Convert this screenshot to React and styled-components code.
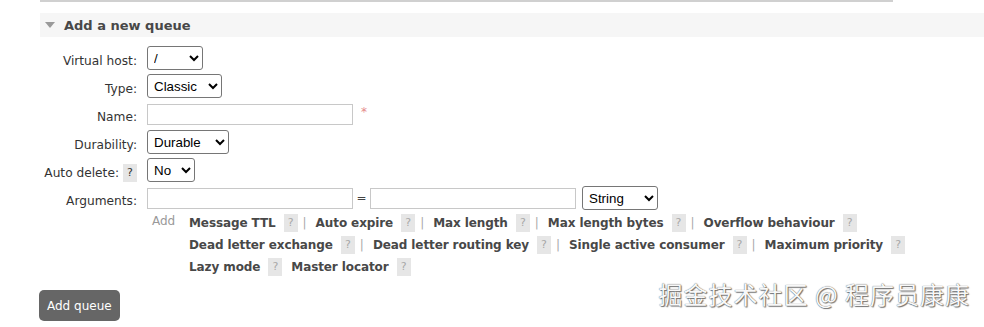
import React from "react";
import styled, { createGlobalStyle } from "styled-components";

const Global = createGlobalStyle`
  body {
    margin: 0;
    background: #fff;
    font-family: "DejaVu Sans", Verdana, sans-serif;
    font-size: 12px;
    color: #484848;
  }
`;

const Page = styled.div`
  position: relative;
  width: 984px;
  height: 327px;
  overflow: hidden;
  padding-left: 40px;
  box-sizing: border-box;
`;

const TopRule = styled.div`
  width: 853px;
  height: 2px;
  background: #d0d0d0;
`;

const Section = styled.div`
  margin-top: 11px;
`;

const SectionHead = styled.div`
  display: flex;
  align-items: center;
  height: 24px;
  background: #f6f6f6;
  margin-right: -40px;
  padding-left: 5px;
  font-size: 13px;
  font-weight: bold;
  color: #484848;
`;

const Arrow = styled.span`
  width: 0;
  height: 0;
  border-left: 5px solid transparent;
  border-right: 5px solid transparent;
  border-top: 6px solid #9a9a9a;
  margin-right: 9px;
`;

const Form = styled.div`
  display: grid;
  grid-template-columns: 97px 1fr;
  grid-auto-rows: 28px;
  column-gap: 10px;
  margin-top: 7px;
`;

const Label = styled.div`
  display: flex;
  align-items: center;
  justify-content: flex-end;
  gap: 4px;
  padding-top: 5px;
  font-size: 12.2px;
  color: #333;
`;

const Field = styled.div`
  display: flex;
  align-items: center;
`;

const Select = styled.select`
  width: ${(p) => p.$w}px;
  height: 24px;
  font-family: "Liberation Sans", Arial, sans-serif;
  font-size: 13.33px;
  color: #000;
  background: #fff;
  border: 1px solid #767676;
  border-radius: 3px;
  padding: 0 2px;
  margin-left: ${(p) => p.$ml || 0}px;
`;

const TextInput = styled.input`
  width: 206px;
  height: 21px;
  box-sizing: border-box;
  border: 1px solid #c8c8c8;
  background: #fff;
  padding: 0 3px;
`;

const Required = styled.span`
  color: #e58a8a;
  font-size: 12px;
  margin-left: 8px;
  margin-top: -4px;
`;

const Equals = styled.span`
  width: 17px;
  text-align: center;
  font-size: 12px;
  color: #444;
`;

const Help = styled.span`
  display: inline-flex;
  align-items: center;
  justify-content: center;
  width: 14px;
  height: 18px;
  background: #e6e6e6;
  color: ${(p) => (p.$dark ? "#333" : "#a8a8a8")};
  font-size: 11px;
  font-weight: normal;
  margin: 0 ${(p) => (p.$inline ? p.$mr || 5 : 0)}px 0 ${(p) => (p.$inline ? 8 : 0)}px;
  vertical-align: middle;
`;

const AddRow = styled.div`
  display: flex;
  margin-left: 112px;
  line-height: 22px;
`;

const AddLabel = styled.span`
  color: #999;
  font-size: 12px;
  width: 37px;
  margin-top: -2px;
`;

const Links = styled.div`
  display: flex;
  flex-direction: column;
`;

const LinkLine = styled.div`
  display: flex;
  align-items: center;
  height: 22px;
  white-space: nowrap;
`;

const Opt = styled.span`
  font-weight: bold;
  font-size: 12px;
  letter-spacing: -0.1px;
  color: #484848;
`;

const Sep = styled.span`
  color: #aaa;
  margin-right: 9px;
`;

const Button = styled.button`
  margin-top: 12px;
  margin-left: -1px;
  height: 31px;
  padding: 0 8px;
  background: #666;
  color: #fff;
  border: none;
  border-radius: 5px;
  font-family: "DejaVu Sans", Verdana, sans-serif;
  font-size: 12px;
`;

const Watermark = styled.div`
  position: absolute;
  right: 14px;
  bottom: 16px;
  font-family: "Noto Sans CJK SC", sans-serif;
  font-size: 24px;
  letter-spacing: 1px;
  color: #f8f8f8;
  text-shadow: 0 0 1px #444, 1px 1px 1px #777;
`;

const lines = [
  [["Message TTL"], ["Auto expire"], ["Max length"], ["Max length bytes"], ["Overflow behaviour", true]],
  [["Dead letter exchange"], ["Dead letter routing key"], ["Single active consumer"], ["Maximum priority", true]],
  [["Lazy mode", false, true], ["Master locator", true]],
];

const App = () => (
  <Page>
    <Global />
    <TopRule />
    <Section>
      <SectionHead>
        <Arrow />
        Add a new queue
      </SectionHead>
      <Form>
        <Label>Virtual host:</Label>
        <Field>
          <Select $w={56}>
            <option>/</option>
          </Select>
        </Field>
        <Label>Type:</Label>
        <Field>
          <Select $w={75}>
            <option>Classic</option>
          </Select>
        </Field>
        <Label>Name:</Label>
        <Field>
          <TextInput />
          <Required>*</Required>
        </Field>
        <Label>Durability:</Label>
        <Field>
          <Select $w={82}>
            <option>Durable</option>
          </Select>
        </Field>
        <Label>
          Auto delete: <Help $dark>?</Help>
        </Label>
        <Field>
          <Select $w={48}>
            <option>No</option>
          </Select>
        </Field>
        <Label>Arguments:</Label>
        <Field>
          <TextInput />
          <Equals>=</Equals>
          <TextInput />
          <Select $w={76} $ml={6}>
            <option>String</option>
          </Select>
        </Field>
      </Form>
      <AddRow>
        <AddLabel>Add</AddLabel>
        <Links>
          {lines.map((line, i) => (
            <LinkLine key={i}>
              {line.map(([name, last, noSep]) => (
                <React.Fragment key={name}>
                  <Opt>{name}</Opt>
                  <Help $inline $mr={noSep ? 9 : 5}>?</Help>
                  {!last && !noSep && <Sep>|</Sep>}
                </React.Fragment>
              ))}
            </LinkLine>
          ))}
        </Links>
      </AddRow>
      <Button>Add queue</Button>
    </Section>
    <Watermark>掘金技术社区 @ 程序员康康</Watermark>
  </Page>
);

export default App;
